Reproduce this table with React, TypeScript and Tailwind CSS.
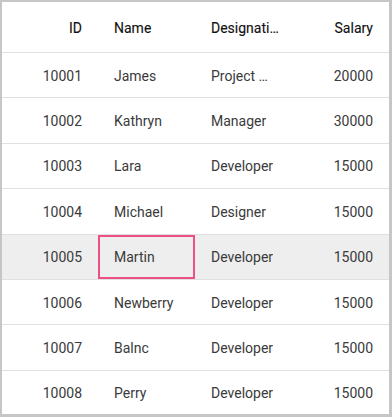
const rows = [
  { id: 10001, name: 'James', designation: 'Project Manager', salary: 20000 },
  { id: 10002, name: 'Kathryn', designation: 'Manager', salary: 30000 },
  { id: 10003, name: 'Lara', designation: 'Developer', salary: 15000 },
  { id: 10004, name: 'Michael', designation: 'Designer', salary: 15000 },
  { id: 10005, name: 'Martin', designation: 'Developer', salary: 15000 },
  { id: 10006, name: 'Newberry', designation: 'Developer', salary: 15000 },
  { id: 10007, name: 'Balnc', designation: 'Developer', salary: 15000 },
  { id: 10008, name: 'Perry', designation: 'Developer', salary: 15000 },
]

const cols = 'grid grid-cols-[96px_97px_97px_97px]'

export default function App() {
  return (
    <div
      className="w-[392px] h-[417px] overflow-hidden bg-white border-l-2 border-t-2 border-r-[3px] border-b-[3px] border-[#c6c6c6] text-[14px]"
      style={{ fontFamily: 'Roboto, "Liberation Sans", sans-serif' }}
    >
      {/* Header */}
      <div className={`${cols} h-[51px] border-b border-[#e0e0e0] text-[#111111] [-webkit-text-stroke:0.12px_#111111]`}>
        <div className="flex items-center justify-end px-4 pt-[2px]">ID</div>
        <div className="flex items-center px-4 pt-[2px]">Name</div>
        <div className="flex items-center pl-4 pr-[11px] pt-[2px] min-w-0">
          <span className="truncate">Designation</span>
        </div>
        <div className="flex items-center justify-end px-4 pt-[2px]">Salary</div>
      </div>

      {/* Body */}
      {rows.map(r => {
        const selected = r.id === 10005
        return (
          <div
            key={r.id}
            className={`${cols} h-[45.4px] border-b border-[#e0e0e0] text-[#3a3a3a] ${selected ? 'bg-[#eeeeee]' : ''}`}
          >
            <div className="flex items-center justify-end px-4 pt-[2px]">{r.id}</div>
            <div className={`flex items-center px-4 pt-[2px] ${selected ? 'border-2 border-[#ee4f86] px-[14px] pt-0' : ''}`}>{r.name}</div>
            <div className="flex items-center px-4 pt-[2px] min-w-0">
              <span className="truncate">{r.designation}</span>
            </div>
            <div className="flex items-center justify-end px-4 pt-[2px]">{r.salary}</div>
          </div>
        )
      })}
    </div>
  )
}
